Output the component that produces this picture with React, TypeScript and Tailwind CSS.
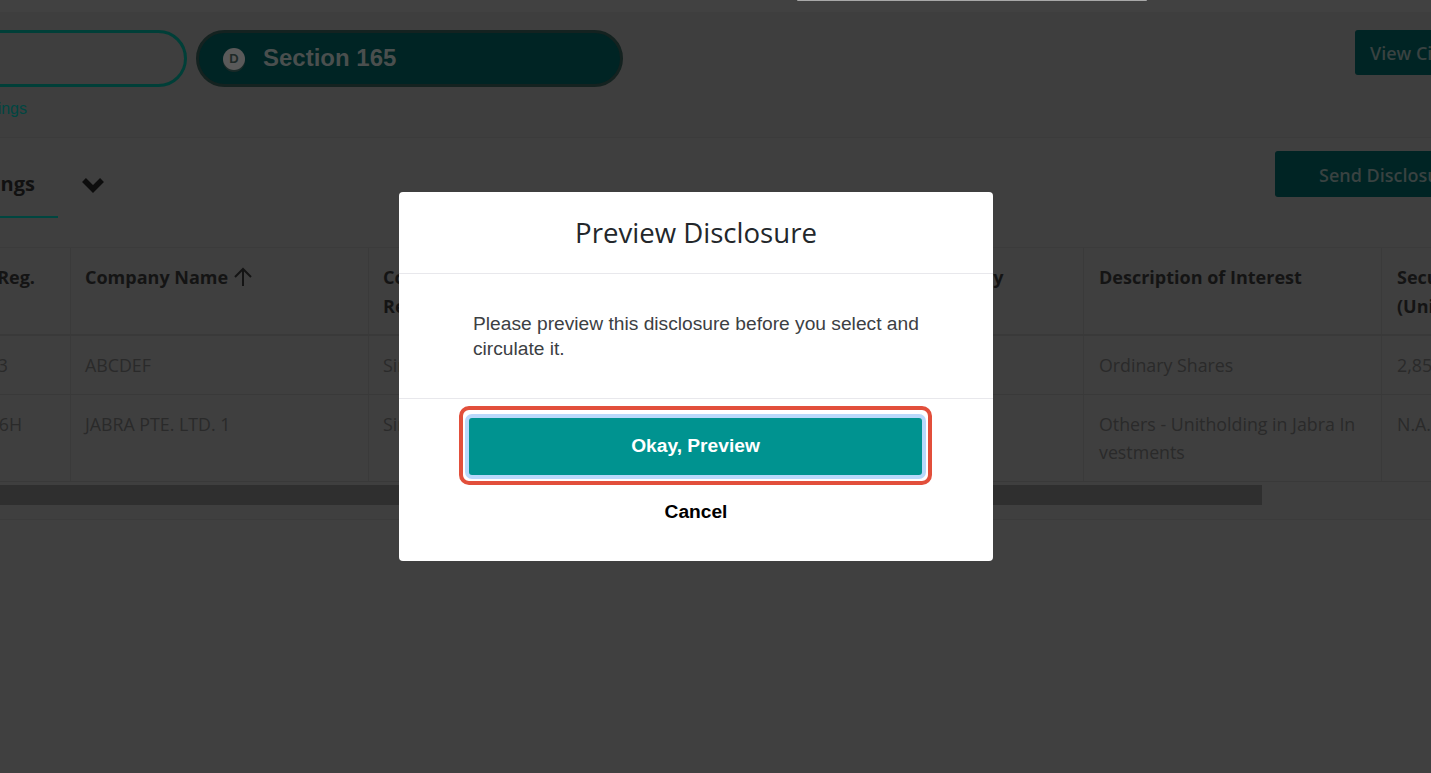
const ui = { fontFamily: '"Open Sans", "Noto Sans", sans-serif' };
const arial = { fontFamily: '"Liberation Sans", Arial, sans-serif' };

function ClippedLeft({ width, text, className, font }: { width: string; text: string; className: string; font?: React.CSSProperties }) {
  return (
    <div className={`flex justify-end overflow-hidden whitespace-nowrap ${width} ${className}`} style={font}>
      <span>{text}</span>
    </div>
  );
}

const cols = "grid grid-cols-[71px_298px_539px_176px_298px_49px]";
const th = "border-r border-[#3a3a3a] px-[15px] pt-[15px] text-[18px] leading-[29px] font-bold text-[#141414]";
const td = "border-r border-[#3a3a3a] px-[15px] pt-[15px] text-[17.8px] leading-[28px] text-[#2a2a2a]";

export default function App() {
  return (
    <div className="relative h-[773px] w-[1431px] overflow-hidden bg-[#404040]" style={ui}>
      <div className="flex h-[12px] justify-start bg-[#414141]">
        <div className="ml-[797px] h-[1px] w-[350px] rounded-b-sm bg-[#a8a8a8]" />
      </div>

      <header className="h-[126px] border-b border-[#3b3b3b] bg-[#3e3e3e] pt-[18px]">
        <div className="flex items-start">
          <div className="-ml-[40px] h-[57px] w-[227px] shrink-0 rounded-full border-[3px] border-[#003f38]" />
          <div
            className="ml-[9px] flex h-[57px] w-[427px] shrink-0 items-center rounded-full border-[3px] border-[#142220] bg-[#002424] pl-[24px]"
            style={arial}
          >
            <span className="flex h-[22px] w-[22px] items-center justify-center rounded-full bg-[#5a5a5a] text-[13px] font-bold text-[#1f2a28] shadow-[0_2px_0_#1a2a28]">
              D
            </span>
            <span className="-mt-[2px] ml-[18px] text-[24px] font-bold text-[#4a4f4e]">Section 165</span>
          </div>
          <div className="ml-[732px] flex h-[45px] w-[120px] shrink-0 items-center rounded-[3px] bg-[#002424] pl-[15px] pt-[2px] text-[18px] font-semibold whitespace-nowrap text-[#394241]">
            View Circulation
          </div>
        </div>
        <ClippedLeft
          width="w-[27px]"
          text="Holdings"
          font={arial}
          className="mt-[12px] text-[16px] leading-[20px] text-[#004642]"
        />
      </header>

      <section className="h-[382px] border-b border-[#3b3b3b] bg-[#3f3f3f]">
        <div className="flex h-[109px] items-start">
          <div className="h-[80px] w-[58px] shrink-0 border-b-2 border-[#004640]">
            <ClippedLeft
              width="w-[35px]"
              text="Holdings"
              className="mt-[31px] text-[20px] leading-[30px] font-bold text-[#111]"
            />
          </div>
          <svg width="24" height="16" viewBox="0 0 24 16" fill="none" stroke="#0d0d0d" strokeWidth="5.5" className="mt-[39px] ml-[23px] shrink-0">
            <path d="M3 3l9 9 9-9" />
          </svg>
          <div className="ml-[1170px] mt-[13px] flex h-[46px] w-[200px] shrink-0 items-center rounded-[3px] bg-[#002424] pl-[44px] pt-[2px] text-[18px] font-semibold whitespace-nowrap text-[#394241]">
            Send Disclosure
          </div>
        </div>

        <div className="h-[235px] border-t border-[#3b3b3b]">
          <div className={`${cols} h-[88px] border-b-2 border-[#393939]`}>
            <div className={`${th} pl-0 pr-[35px] whitespace-nowrap`}>
              <span className="float-right">Reg.</span>
            </div>
            <div className={`${th} flex items-start gap-[5px] pl-[14px]`}>
              <span>Company Name</span>
              <svg width="20" height="20" viewBox="0 0 20 20" fill="none" stroke="#141414" strokeWidth="2" className="mt-[4px]">
                <path d="M10 19V2M2 10l8-8 8 8" />
              </svg>
            </div>
            <div className={`${th} pl-[14px]`}>
              Country of
              <br />
              Registration
            </div>
            <div className={`${th} whitespace-nowrap`}>Category</div>
            <div className={th}>Description of Interest</div>
            <div className={`${th} border-r-0 whitespace-nowrap`}>
              Securities
              <br />
              (Units)
            </div>
          </div>
          <div className={`${cols} h-[59px] border-b border-[#393939]`}>
            <div className={`${td} pl-0 pr-[62px]`}>
              <span className="float-right">3</span>
            </div>
            <div className={`${td} pl-[14px]`}>ABCDEF</div>
            <div className={`${td} pl-[14px]`}>Singapore</div>
            <div className={td} />
            <div className={td}>Ordinary Shares</div>
            <div className={`${td} border-r-0 whitespace-nowrap`}>2,850,000</div>
          </div>
          <div className={`${cols} h-[87px] border-b border-[#393939]`}>
            <div className={`${td} pl-0 pr-[48px]`}>
              <span className="float-right">6H</span>
            </div>
            <div className={`${td} pl-[14px]`}>JABRA PTE. LTD. 1</div>
            <div className={`${td} pl-[14px]`}>Singapore</div>
            <div className={td} />
            <div className={`${td} break-all pr-[25px]`}>Others - Unitholding in Jabra Investments</div>
            <div className={`${td} border-r-0 whitespace-nowrap`}>N.A.</div>
          </div>
        </div>

        <div className="mt-[3px] h-[20px] w-[1262px] bg-[#2f2f2f]" />
      </section>

      <div className="absolute top-[192px] left-[399px] flex h-[369px] w-[594px] flex-col rounded-[4px] bg-white">
        <div className="flex h-[82px] items-center justify-center border-b border-[#e8e8ec] pb-[1px]">
          <h2 className="text-[27.6px] leading-[40px] text-[#23272b]">Preview Disclosure</h2>
        </div>
        <div className="h-[125px] border-b border-[#e8e8ec] pr-[70px] pl-[74px] pt-[37px] text-[19.2px] leading-[25px] text-[#3c4043]" style={arial}>
          Please preview this disclosure before you select and circulate it.
        </div>
        <div className="flex flex-col items-center pt-[7px]" style={arial}>
          <div className="mr-[1px] h-[79px] w-[473px] rounded-[10px] border-[4px] border-[#e24f3b] px-[6px] pt-[8px] pb-[6px]">
            <button className="h-[57px] w-full rounded-[3px] bg-[#009390] text-[19.2px] font-bold text-white shadow-[0_0_0_4px_#b9d9fb]">
              Okay, Preview
            </button>
          </div>
          <button className="mt-[14px] text-[19.2px] leading-[25px] font-bold text-black">Cancel</button>
        </div>
      </div>
    </div>
  );
}
